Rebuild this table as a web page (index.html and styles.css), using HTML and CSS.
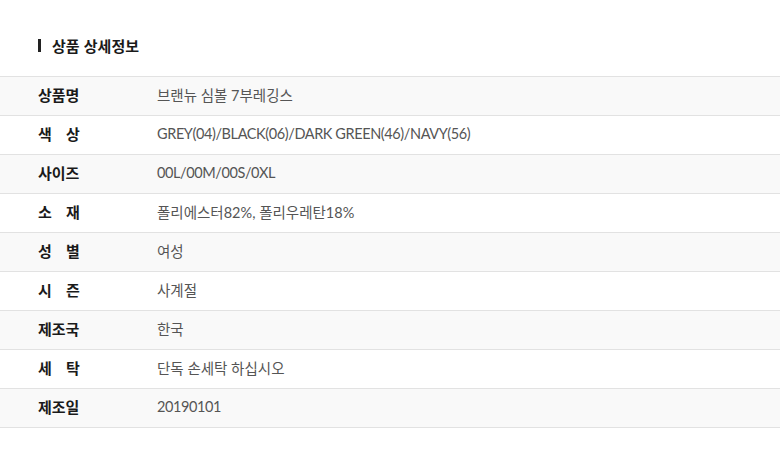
FILE: index.html
```html
<!DOCTYPE html>
<html lang="ko">
<head>
<meta charset="utf-8">
<link rel="stylesheet" href="styles.css">
</head>
<body>
<section class="detail">
  <h2 class="title">상품 상세정보</h2>
  <table class="info">
    <tbody>
      <tr><th>상품명</th><td>브랜뉴 심볼 7부레깅스</td></tr>
      <tr><th><span class="sp">색</span>상</th><td class="en">GREY(04)/BLACK(06)/DARK GREEN(46)/NAVY(56)</td></tr>
      <tr><th>사이즈</th><td class="en">00L/00M/00S/0XL</td></tr>
      <tr><th><span class="sp">소</span>재</th><td>폴리에스터82%, 폴리우레탄18%</td></tr>
      <tr><th><span class="sp">성</span>별</th><td>여성</td></tr>
      <tr><th><span class="sp">시</span>즌</th><td>사계절</td></tr>
      <tr><th>제조국</th><td>한국</td></tr>
      <tr><th><span class="sp">세</span>탁</th><td>단독 손세탁 하십시오</td></tr>
      <tr><th>제조일</th><td class="en">20190101</td></tr>
    </tbody>
  </table>
</section>
</body>
</html>
```
FILE: styles.css
```css
html, body {
  margin: 0;
  padding: 0;
  background: #fff;
}
body {
  font-family: "Noto Sans CJK KR", "Noto Sans", sans-serif;
  color: #222;
}
.detail {
  padding-top: 39px;
}
.title {
  margin: 0 0 24px 38px;
  padding-left: 11px;
  border-left: 3px solid #222;
  font-size: 15px;
  font-weight: 700;
  line-height: 13px;
  height: 13px;
  display: flex;
  align-items: center;
  color: #1a1a1a;
}
.info {
  width: 100%;
  border-collapse: collapse;
  border-top: 1px solid #e2e2e2;
}
.info tr {
  height: 39px;
  border-bottom: 1px solid #e2e2e2;
}
.info tr:nth-child(odd) {
  background: #f9f9f9;
}
.info th {
  width: 157px;
  box-sizing: border-box;
  padding: 0 0 3px 38px;
  text-align: left;
  font-size: 15px;
  font-weight: 700;
  color: #1a1a1a;
}
.info td {
  padding: 0 0 3px 0;
  font-family: Lato, "Noto Sans CJK KR", sans-serif;
  font-size: 14.5px;
  color: #555;
  font-weight: 400;
}
.info td.en {
  letter-spacing: -0.4px;
}
.sp {
  display: inline-block;
  width: 28px;
}
```
